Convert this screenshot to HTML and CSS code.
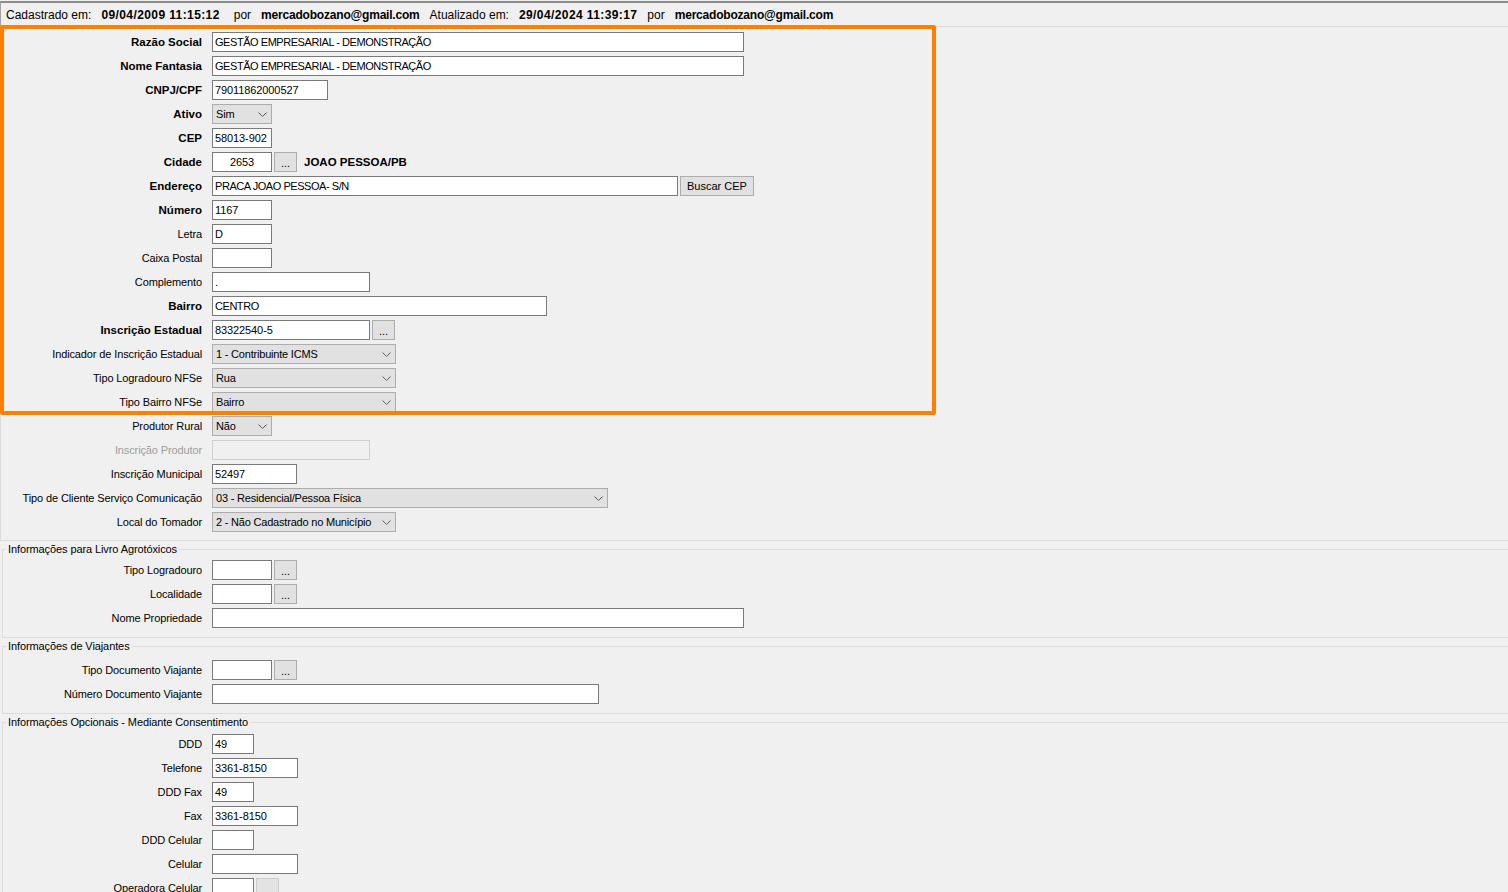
FILE: index.html
```html
<!DOCTYPE html>
<html lang="pt-BR">
<head>
<meta charset="utf-8">
<title>Cadastro</title>
<link rel="stylesheet" href="styles.css">
</head>
<body>
<div class="topbar">
  <span>Cadastrado em:</span>
  <span class="bt dt">09/04/2009 11:15:12</span>
  <span class="por">por</span>
  <span class="bt em">mercadobozano@gmail.com</span>
  <span>Atualizado em:</span>
  <span class="bt dt">29/04/2024 11:39:17</span>
  <span>por</span>
  <span class="bt em">mercadobozano@gmail.com</span>
</div>

<div class="panel">
  <div class="row"><span class="lbl b">Razão Social</span><div class="ctl"><span class="inp caps w532">GESTÃO EMPRESARIAL - DEMONSTRAÇÃO</span></div></div>
  <div class="row"><span class="lbl b">Nome Fantasia</span><div class="ctl"><span class="inp caps w532">GESTÃO EMPRESARIAL - DEMONSTRAÇÃO</span></div></div>
  <div class="row"><span class="lbl b">CNPJ/CPF</span><div class="ctl"><span class="inp w116">79011862000527</span></div></div>
  <div class="row"><span class="lbl b">Ativo</span><div class="ctl"><span class="sel w60"><span>Sim</span><svg class="chev" width="9" height="5" viewBox="0 0 9 5"><path d="M0.5 0.5 L4.5 4.5 L8.5 0.5" fill="none" stroke="#606060"/></svg></span></div></div>
  <div class="row"><span class="lbl b">CEP</span><div class="ctl"><span class="inp w60">58013-902</span></div></div>
  <div class="row"><span class="lbl b">Cidade</span><div class="ctl"><span class="inp w60 ctr">2653</span><span class="btn w23 dots">...</span><span class="city">JOAO PESSOA/PB</span></div></div>
  <div class="row"><span class="lbl b">Endereço</span><div class="ctl"><span class="inp caps w466">PRACA JOAO PESSOA- S/N</span><span class="btn w74">Buscar CEP</span></div></div>
  <div class="row"><span class="lbl b">Número</span><div class="ctl"><span class="inp w60">1167</span></div></div>
  <div class="row"><span class="lbl">Letra</span><div class="ctl"><span class="inp w60">D</span></div></div>
  <div class="row"><span class="lbl">Caixa Postal</span><div class="ctl"><span class="inp w60"></span></div></div>
  <div class="row"><span class="lbl">Complemento</span><div class="ctl"><span class="inp w158">.</span></div></div>
  <div class="row"><span class="lbl b">Bairro</span><div class="ctl"><span class="inp caps w335">CENTRO</span></div></div>
  <div class="row"><span class="lbl b">Inscrição Estadual</span><div class="ctl"><span class="inp w158">83322540-5</span><span class="btn w23 dots">...</span></div></div>
  <div class="row"><span class="lbl">Indicador de Inscrição Estadual</span><div class="ctl"><span class="sel w184"><span>1 - Contribuinte ICMS</span><svg class="chev" width="9" height="5" viewBox="0 0 9 5"><path d="M0.5 0.5 L4.5 4.5 L8.5 0.5" fill="none" stroke="#606060"/></svg></span></div></div>
  <div class="row"><span class="lbl">Tipo Logradouro NFSe</span><div class="ctl"><span class="sel w184"><span>Rua</span><svg class="chev" width="9" height="5" viewBox="0 0 9 5"><path d="M0.5 0.5 L4.5 4.5 L8.5 0.5" fill="none" stroke="#606060"/></svg></span></div></div>
  <div class="row"><span class="lbl">Tipo Bairro NFSe</span><div class="ctl"><span class="sel w184"><span>Bairro</span><svg class="chev" width="9" height="5" viewBox="0 0 9 5"><path d="M0.5 0.5 L4.5 4.5 L8.5 0.5" fill="none" stroke="#606060"/></svg></span></div></div>
  <div class="row"><span class="lbl">Produtor Rural</span><div class="ctl"><span class="sel w60"><span>Não</span><svg class="chev" width="9" height="5" viewBox="0 0 9 5"><path d="M0.5 0.5 L4.5 4.5 L8.5 0.5" fill="none" stroke="#606060"/></svg></span></div></div>
  <div class="row"><span class="lbl dis-lbl">Inscrição Produtor</span><div class="ctl"><span class="inp dis w158"></span></div></div>
  <div class="row"><span class="lbl">Inscrição Municipal</span><div class="ctl"><span class="inp w85">52497</span></div></div>
  <div class="row"><span class="lbl">Tipo de Cliente Serviço Comunicação</span><div class="ctl"><span class="sel w396"><span>03 - Residencial/Pessoa Física</span><svg class="chev" width="9" height="5" viewBox="0 0 9 5"><path d="M0.5 0.5 L4.5 4.5 L8.5 0.5" fill="none" stroke="#606060"/></svg></span></div></div>
  <div class="row"><span class="lbl">Local do Tomador</span><div class="ctl"><span class="sel w184"><span>2 - Não Cadastrado no Município</span><svg class="chev" width="9" height="5" viewBox="0 0 9 5"><path d="M0.5 0.5 L4.5 4.5 L8.5 0.5" fill="none" stroke="#606060"/></svg></span></div></div>
</div>

<fieldset class="group g1">
  <legend>Informações para Livro Agrotóxicos</legend>
  <div class="row"><span class="lbl">Tipo Logradouro</span><div class="ctl"><span class="inp w60"></span><span class="btn w23 dots">...</span></div></div>
  <div class="row"><span class="lbl">Localidade</span><div class="ctl"><span class="inp w60"></span><span class="btn w23 dots">...</span></div></div>
  <div class="row"><span class="lbl">Nome Propriedade</span><div class="ctl"><span class="inp w532"></span></div></div>
</fieldset>

<fieldset class="group g2">
  <legend>Informações de Viajantes</legend>
  <div class="row"><span class="lbl">Tipo Documento Viajante</span><div class="ctl"><span class="inp w60"></span><span class="btn w23 dots">...</span></div></div>
  <div class="row"><span class="lbl">Número Documento Viajante</span><div class="ctl"><span class="inp w387"></span></div></div>
</fieldset>

<fieldset class="group g3">
  <legend>Informações Opcionais - Mediante Consentimento</legend>
  <div class="row"><span class="lbl">DDD</span><div class="ctl"><span class="inp w42">49</span></div></div>
  <div class="row"><span class="lbl">Telefone</span><div class="ctl"><span class="inp w86">3361-8150</span></div></div>
  <div class="row"><span class="lbl">DDD Fax</span><div class="ctl"><span class="inp w42">49</span></div></div>
  <div class="row"><span class="lbl">Fax</span><div class="ctl"><span class="inp w86">3361-8150</span></div></div>
  <div class="row"><span class="lbl">DDD Celular</span><div class="ctl"><span class="inp w42"></span></div></div>
  <div class="row"><span class="lbl">Celular</span><div class="ctl"><span class="inp w86"></span></div></div>
  <div class="row"><span class="lbl">Operadora Celular</span><div class="ctl"><span class="inp w42"></span><span class="btn w23 btn-dis"></span></div></div>
</fieldset>

<div class="highlight"></div>
</body>
</html>
```

FILE: styles.css
```css
html, body {
  margin: 0;
  padding: 0;
  height: 100%;
  overflow: hidden;
}

body {
  position: relative;
  background: #f0f0f0;
  font-family: "Liberation Sans", Arial, sans-serif;
  font-size: 11px;
  color: #000;
}

/* Top info bar */
.topbar {
  margin-top: 1px;
  height: 23px;
  border-top: 2px solid #8c8c8c;
  border-left: 1px solid #a0a0a0;
  border-bottom: 1px solid #dadada;
  padding-left: 5px;
  display: flex;
  align-items: center;
  gap: 10px;
  font-size: 12px;
  white-space: nowrap;
}

.topbar .bt {
  font-weight: bold;
}

.topbar .dt {
  letter-spacing: 0.4px;
}

.topbar .em {
  letter-spacing: -0.2px;
}

.topbar .por {
  margin-left: 4px;
}

/* Main panel */
.panel {
  border-left: 1px solid #dcdcdc;
  border-bottom: 1px solid #dcdcdc;
  padding: 3px 0 6px;
}

.row {
  display: flex;
  align-items: center;
  height: 24px;
}

.lbl {
  flex: none;
  width: 201px;
  margin-right: 10px;
  text-align: right;
  white-space: nowrap;
  letter-spacing: -0.12px;
}

.group .lbl {
  width: 199px;
}

.b {
  font-weight: bold;
  font-size: 11.5px;
  letter-spacing: 0;
}

.dis-lbl {
  color: #9d9d9d;
}

.ctl {
  display: flex;
  align-items: center;
}

.inp {
  box-sizing: border-box;
  height: 20px;
  border: 1px solid #7a7a7a;
  background: #fff;
  padding: 0 2px;
  display: flex;
  align-items: center;
  white-space: nowrap;
  overflow: hidden;
  letter-spacing: -0.1px;
}

.inp.caps {
  letter-spacing: -0.45px;
}

.inp.ctr {
  justify-content: center;
}

.inp.dis {
  border-color: #d0d0d0;
  background: #f0f0f0;
}

.sel {
  box-sizing: border-box;
  height: 20px;
  border: 1px solid #adadad;
  background: #e1e1e1;
  padding: 0 4px 0 3px;
  display: flex;
  align-items: center;
  justify-content: space-between;
  white-space: nowrap;
  overflow: hidden;
  letter-spacing: -0.2px;
}

.chev {
  flex: none;
  display: block;
  margin-left: 4px;
}

.btn {
  box-sizing: border-box;
  height: 20px;
  margin-left: 2px;
  border: 1px solid #adadad;
  background: #e1e1e1;
  display: flex;
  align-items: center;
  justify-content: center;
  white-space: nowrap;
}

.btn.dots {
  align-items: flex-end;
  padding-bottom: 2px;
  line-height: 11px;
}

.btn-dis {
  border-color: #cccccc;
  background: #e3e3e3;
}

.city {
  margin-left: 7px;
  font-weight: bold;
  font-size: 11.5px;
}

/* widths */
.w23 { width: 23px; }
.w42 { width: 42px; }
.w60 { width: 60px; }
.w74 { width: 74px; }
.w85 { width: 85px; }
.w86 { width: 86px; }
.w116 { width: 116px; }
.w158 { width: 158px; }
.w184 { width: 184px; }
.w335 { width: 335px; }
.w387 { width: 387px; }
.w396 { width: 396px; }
.w466 { width: 466px; }
.w532 { width: 532px; }

/* Group boxes */
.group {
  margin: 1px 0 0 2px;
  padding: 0;
  min-width: 0;
  border: 1px solid #dcdcdc;
  border-right: none;
}

.group legend {
  margin-left: 3px;
  padding: 0 2px;
  line-height: 14px;
  font-size: 11px;
  letter-spacing: -0.1px;
}

.g1 { padding: 2px 0 7px; }
.g2 { padding: 5px 0 7px; }
.g3 { padding: 3px 0 0; }

/* Orange highlight overlay */
.highlight {
  position: absolute;
  left: 0;
  top: 25px;
  width: 936px;
  height: 390px;
  box-sizing: border-box;
  border: 4px solid #ff8000;
  border-radius: 2px;
  pointer-events: none;
}
```
